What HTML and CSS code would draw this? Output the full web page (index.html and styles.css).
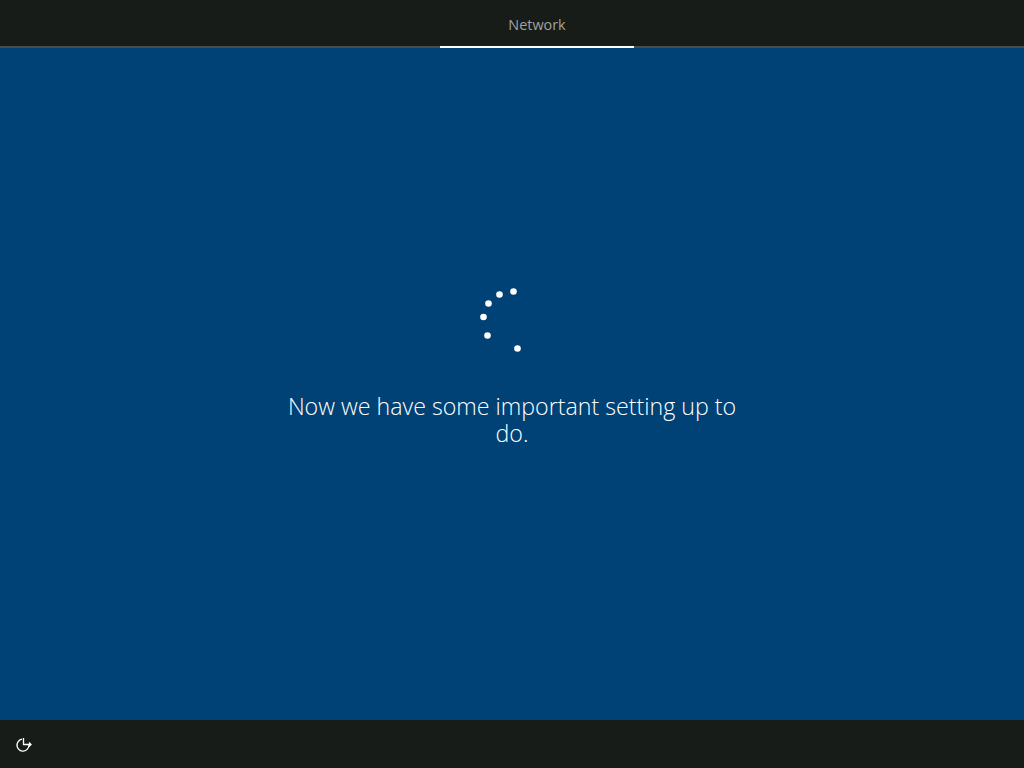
FILE: index.html
```html
<!DOCTYPE html>
<html lang="en">
<head>
<meta charset="utf-8">
<title>Network</title>
<link rel="stylesheet" href="styles.css">
</head>
<body>
<div class="page">
  <header class="topbar">
    <div class="tab">Network</div>
  </header>
  <main class="content">
    <svg class="spinner" width="60" height="80" viewBox="0 0 60 80" aria-hidden="true">
      <circle cx="43.500" cy="11.500" r="3.300" />
      <circle cx="29.500" cy="14.500" r="3.300" />
      <circle cx="18.500" cy="23.500" r="3.300" />
      <circle cx="13.500" cy="37" r="3.300" />
      <circle cx="17.500" cy="55.500" r="3.300" />
      <circle cx="47.500" cy="68.500" r="3.300" />
    </svg>
    <p class="message">Now we have some important setting up to do.</p>
  </main>
  <footer class="bottombar">
    <svg class="ease" width="18" height="18" viewBox="0 0 18 18" aria-hidden="true">
      <path d="M7 3.200A6 6 0 1 0 14 9" />
      <path d="M8.500 2V8.500H16M14 6.500L16 8.500L14 10.500" />
    </svg>
  </footer>
</div>
</body>
</html>
```
FILE: styles.css
```css
html, body {
  margin: 0;
  height: 100%;
  overflow: hidden;
}
.page {
  display: flex;
  flex-direction: column;
  height: 768px;
  background: #004275;
  font-family: "Open Sans", "Noto Sans", sans-serif;
}
.topbar {
  flex: none;
  display: flex;
  justify-content: center;
  height: 46px;
  padding-left: 50px;
  background: #181c19;
  border-bottom: 2px solid #4a4c4a;
}
.tab {
  width: 194px;
  height: 46px;
  margin-bottom: -2px;
  border-bottom: 2px solid #fff;
  color: #a0a2a0;
  font-size: 14.4px;
  line-height: 50px;
  text-align: center;
}
.content {
  flex: 1;
  display: flex;
  flex-direction: column;
  align-items: center;
  padding-top: 232px;
}
.spinner {
  display: block;
  fill: #fff;
  margin-left: -24px;
}
.message {
  width: 470px;
  margin: 33px 0 0;
  color: #fff;
  font-size: 23.2px;
  font-weight: 300;
  line-height: 27px;
  text-align: center;
}
.bottombar {
  flex: none;
  display: flex;
  align-items: center;
  height: 48px;
  padding-left: 15px;
  background: #181c19;
}
.ease {
  margin-top: 2px;
  fill: none;
  stroke: #fff;
  stroke-width: 1.300;
}
```
